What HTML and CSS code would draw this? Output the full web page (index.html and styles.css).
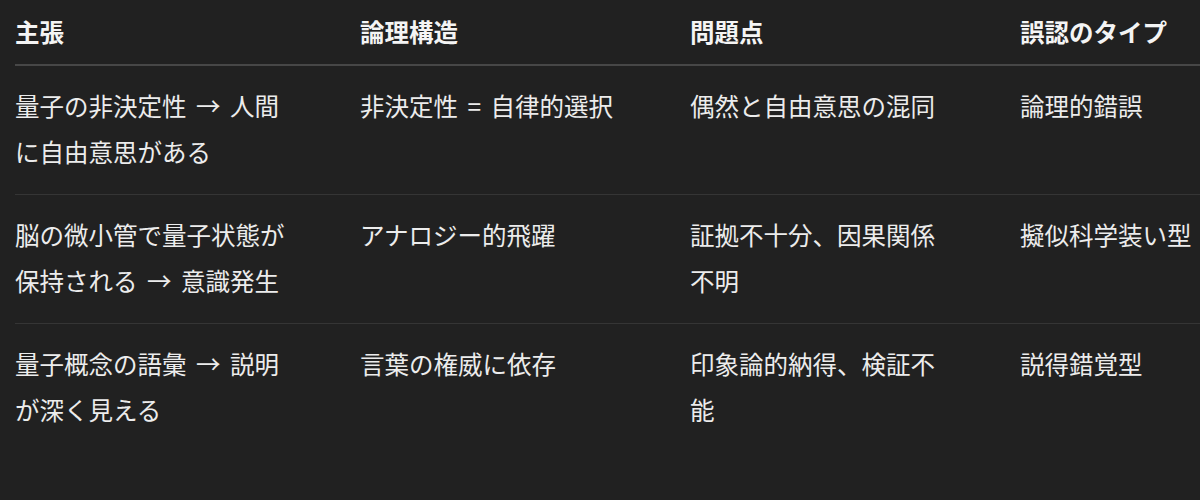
FILE: index.html
```html
<!DOCTYPE html>
<html lang="ja">
<head>
<meta charset="utf-8">
<title>量子と自由意思</title>
<link rel="stylesheet" href="styles.css">
</head>
<body>
<div class="wrap">
<table class="tbl">
<colgroup>
<col class="c1"><col class="c2"><col class="c3"><col class="c4">
</colgroup>
<thead>
<tr><th>主張</th><th>論理構造</th><th>問題点</th><th>誤認のタイプ</th></tr>
</thead>
<tbody>
<tr><td>量子の非決定性 → 人間に自由意思がある</td><td>非決定性 = 自律的選択</td><td>偶然と自由意思の混同</td><td>論理的錯誤</td></tr>
<tr><td>脳の微小管で量子状態が保持される → 意識発生</td><td>アナロジー的飛躍</td><td>証拠不十分、因果関係不明</td><td>擬似科学装い型</td></tr>
<tr class="last"><td>量子概念の語彙 → 説明が深く見える</td><td>言葉の権威に依存</td><td>印象論的納得、検証不能</td><td>説得錯覚型</td></tr>
</tbody>
</table>
</div>
</body>
</html>
```

FILE: styles.css
```css
html, body {
  margin: 0;
  padding: 0;
  background: #212121;
}
body {
  width: 1200px;
  height: 500px;
  overflow: hidden;
  font-family: "Noto Sans CJK JP", "Noto Sans", sans-serif;
  color: #ececec;
}
.wrap {
  padding-left: 15px;
}
.tbl {
  border-collapse: collapse;
  table-layout: fixed;
  width: 1205px;
  font-size: 24.5px;
  line-height: 46.5px;
  word-spacing: 4px;
}
.c1 { width: 345px; }
.c2 { width: 330px; }
.c3 { width: 330px; }
.c4 { width: 200px; }
.tbl th {
  text-align: left;
  font-weight: 700;
  color: #f4f4f4;
  padding: 9px 0 8px 0;
  border-bottom: 2px solid #474747;
}
.tbl td {
  vertical-align: top;
  padding: 17px 0 18px 0;
  border-bottom: 1px solid #353535;
  font-weight: 400;
}
.tbl tr.last td {
  border-bottom: none;
}
.tbl th:nth-child(1), .tbl td:nth-child(1) { padding-right: 72px; }
.tbl th:nth-child(2), .tbl td:nth-child(2) { padding-right: 30px; }
.tbl th:nth-child(3), .tbl td:nth-child(3) { padding-right: 75px; }
.tbl th:nth-child(4), .tbl td:nth-child(4) { padding-right: 0; white-space: nowrap; }
```
